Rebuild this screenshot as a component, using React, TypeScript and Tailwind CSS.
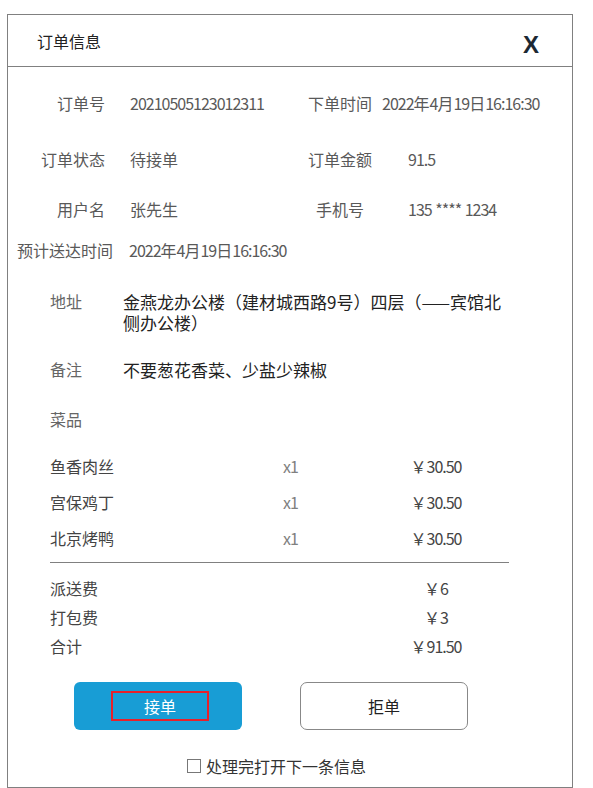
const font = { fontFamily: '"Noto Sans CJK SC", "Noto Sans", sans-serif' };

// latin runs (digits, colon, dots, stars) are drawn a bit tighter than the CJK runs
function Txt({ text }: { text: string }) {
  const parts = text.split(/([0-9:.*x]+)/).filter(Boolean);
  return (
    <>
      {parts.map((p, i) =>
        /^[0-9:.*x]+$/.test(p) ? (
          <span key={i} className="tracking-[-1px]">
            {p}
          </span>
        ) : (
          <span key={i}>{p}</span>
        )
      )}
    </>
  );
}

type InfoRowProps = {
  label: string;
  value: string;
  label2?: string;
  value2?: string;
  gap2?: string;
  className?: string;
};

function InfoRow({ label, value, label2, value2, gap2 = "ml-[28px]", className = "" }: InfoRowProps) {
  return (
    <div className={`flex items-center h-6 leading-6 text-[16px] text-[#595959] ${className}`}>
      <span className="w-[97px] shrink-0 text-right whitespace-nowrap">{label}</span>
      <span className="ml-[25px] w-[170px] shrink-0 whitespace-nowrap">
        <Txt text={value} />
      </span>
      {label2 && <span className="w-[80px] shrink-0 text-center whitespace-nowrap">{label2}</span>}
      {value2 && (
        <span className={`${gap2} whitespace-pre`}>
          <Txt text={value2} />
        </span>
      )}
    </div>
  );
}

const dishes = [
  { name: "鱼香肉丝", qty: "x1", price: "￥30.50" },
  { name: "宫保鸡丁", qty: "x1", price: "￥30.50" },
  { name: "北京烤鸭", qty: "x1", price: "￥30.50" },
];

const fees = [
  { name: "派送费", price: "￥6" },
  { name: "打包费", price: "￥3" },
  { name: "合计", price: "￥91.50" },
];

export default function App() {
  return (
    <div className="min-h-[788px] bg-white pt-[14px] pl-[7px]" style={font}>
      <div className="w-[566px] h-[774px] border border-[#808080] overflow-hidden">
        {/* header */}
        <div className="h-[52px] border-b border-[#808080] flex items-center justify-between pl-[29px] pr-[33px]">
          <span className="text-[16px] text-[#222] leading-6">订单信息</span>
          <span
            className="text-[24px] font-bold text-[#1c2833] leading-6 mt-[8px]"
            style={{ fontFamily: '"Liberation Sans", Arial, sans-serif' }}
          >
            X
          </span>
        </div>

        {/* order info */}
        <InfoRow
          className="mt-[24px]"
          label="订单号"
          value="20210505123012311"
          label2="下单时间"
          value2="2022年4月19日16:16:30"
          gap2="ml-[2px]"
        />
        <InfoRow className="mt-[32px]" label="订单状态" value="待接单" label2="订单金额" value2="91.5" />
        <InfoRow className="mt-[26px]" label="用户名" value="张先生" label2="手机号" value2="135 **** 1234" />
        <div className="mt-[17px] flex items-center h-6 leading-6 text-[16px] text-[#595959] pl-[9px]">
          <span className="whitespace-nowrap">预计送达时间</span>
          <span className="ml-[16px] whitespace-nowrap">
            <Txt text="2022年4月19日16:16:30" />
          </span>
        </div>

        {/* address & note */}
        <div className="mt-[29px] flex items-start pl-[42px]">
          <span className="w-[73px] shrink-0 text-[16px] leading-[21px] text-[#666]">地址</span>
          <span className="w-[392px] text-[17px] leading-[21px] text-[#222]">
            金燕龙办公楼（建材城西路9号）四层（——宾馆北侧办公楼）
          </span>
        </div>
        <div className="mt-[26px] flex items-start pl-[42px]">
          <span className="w-[73px] shrink-0 text-[16px] leading-[21px] text-[#666]">备注</span>
          <span className="text-[17px] leading-[21px] text-[#222]">不要葱花香菜、少盐少辣椒</span>
        </div>
        <div className="mt-[29px] pl-[42px] text-[16px] leading-[21px] text-[#666]">菜品</div>

        {/* dishes */}
        <div className="mt-[18px] pl-[42px]">
          {dishes.map((d) => (
            <div key={d.name} className="flex items-center h-9 text-[16px] leading-6">
              <span className="w-[233px] text-[#444]">{d.name}</span>
              <span className="w-[104px] text-[#808080]">
                <Txt text={d.qty} />
              </span>
              <span className="w-[98px] text-center text-[#444]">
                <Txt text={d.price} />
              </span>
            </div>
          ))}
        </div>
        <div className="ml-[42px] mt-[6px] w-[459px] h-px bg-[#808080]" />

        {/* fees */}
        <div className="mt-[10px] pl-[42px]">
          {fees.map((f) => (
            <div key={f.name} className="flex items-center h-[29px] text-[16px] leading-6 text-[#444]">
              <span className="w-[337px]">{f.name}</span>
              <span className="w-[98px] text-center">
                <Txt text={f.price} />
              </span>
            </div>
          ))}
        </div>

        {/* actions */}
        <div className="mt-[22px] flex pl-[66px] gap-[58px]">
          <button className="w-[168px] h-12 rounded-[6px] bg-[#189dd5] flex items-center justify-center">
            <span className="ml-1 w-[98px] h-[30px] border-2 border-[#e8202a] flex items-center justify-center text-[16px] text-white leading-6">
              接单
            </span>
          </button>
          <button className="w-[168px] h-12 rounded-[7px] border border-[#888] bg-white flex items-center justify-center text-[16px] text-[#222] leading-6">
            拒单
          </button>
        </div>

        <div className="mt-[24px] flex items-center pl-[179px]">
          <span className="w-[14px] h-[14px] border-[1.5px] border-[#777] bg-white" />
          <span className="ml-[5px] text-[16px] leading-6 text-[#333]">处理完打开下一条信息</span>
        </div>
      </div>
    </div>
  );
}
